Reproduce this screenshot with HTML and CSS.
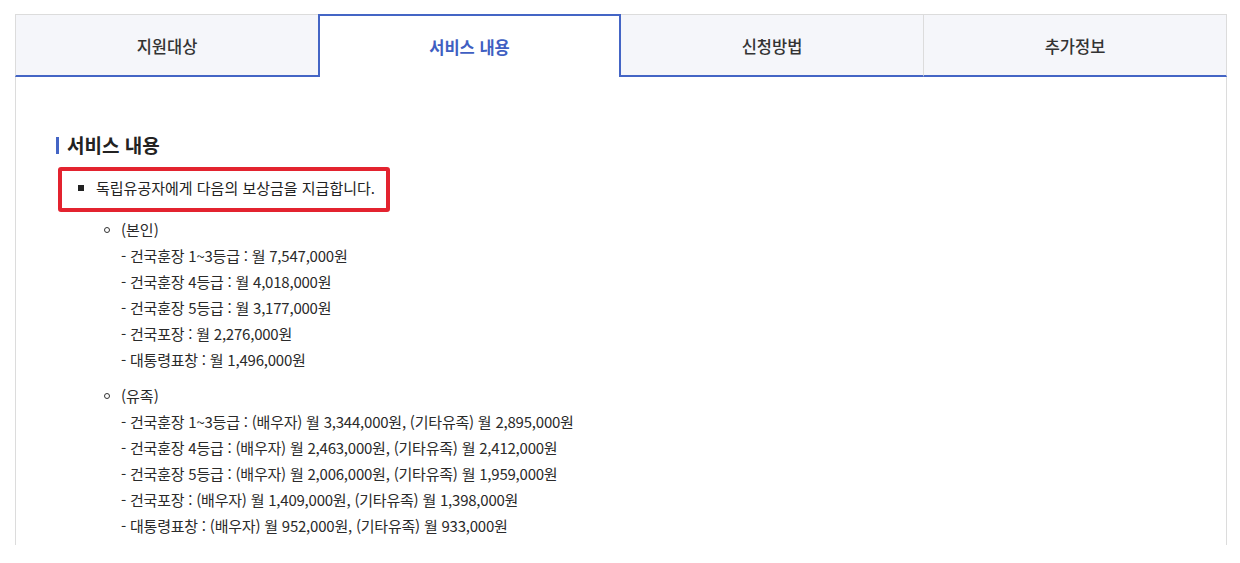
FILE: index.html
```html
<!DOCTYPE html>
<html lang="ko">
<head>
<meta charset="utf-8">
<title>서비스 내용</title>
<link rel="stylesheet" href="styles.css">
</head>
<body>
<div class="wrap">
  <ul class="tabs">
    <li class="tab first">지원대상</li>
    <li class="tab active">서비스 내용</li>
    <li class="tab divider">신청방법</li>
    <li class="tab last">추가정보</li>
  </ul>
  <div class="content">
    <h3 class="title">서비스 내용</h3>
    <div class="highlight">
      <span class="square"></span>
      <span>독립유공자에게 다음의 보상금을 지급합니다.</span>
    </div>
    <div class="group">
      <div class="group-head"><span class="circle"></span>(본인)</div>
      <ul class="lines">
        <li>- 건국훈장 1~3등급 : 월 7,547,000원</li>
        <li>- 건국훈장 4등급 : 월 4,018,000원</li>
        <li>- 건국훈장 5등급 : 월 3,177,000원</li>
        <li>- 건국포장 : 월 2,276,000원</li>
        <li>- 대통령표창 : 월 1,496,000원</li>
      </ul>
    </div>
    <div class="group second">
      <div class="group-head"><span class="circle"></span>(유족)</div>
      <ul class="lines">
        <li>- 건국훈장 1~3등급 : (배우자) 월 3,344,000원, (기타유족) 월 2,895,000원</li>
        <li>- 건국훈장 4등급 : (배우자) 월 2,463,000원, (기타유족) 월 2,412,000원</li>
        <li>- 건국훈장 5등급 : (배우자) 월 2,006,000원, (기타유족) 월 1,959,000원</li>
        <li>- 건국포장 : (배우자) 월 1,409,000원, (기타유족) 월 1,398,000원</li>
        <li>- 대통령표창 : (배우자) 월 952,000원, (기타유족) 월 933,000원</li>
      </ul>
    </div>
  </div>
</div>
</body>
</html>
```
FILE: styles.css
```css
* { box-sizing: border-box; }
html, body { margin: 0; padding: 0; background: #fff; }
body {
  font-family: "Noto Sans CJK KR", "Noto Sans", sans-serif;
  color: #222;
}
.wrap {
  padding: 14px 0 0 15px;
  width: 1227px;
}
.tabs {
  list-style: none;
  margin: 0;
  padding: 0;
  display: flex;
}
.tab {
  width: 303px;
  height: 63px;
  background: #f5f6fa;
  border-top: 1px solid #dcdcdc;
  border-bottom: 2px solid #4465c5;
  display: flex;
  align-items: center;
  justify-content: center;
  font-size: 16.5px;
  font-weight: 500;
  color: #333;
  padding-top: 1px;
}
.tab.first { border-left: 1px solid #dcdcdc; }
.tab.divider { border-right: 1px solid #dcdcdc; }
.tab.last { border-right: 1px solid #dcdcdc; }
.tab.active {
  background: #fff;
  border: 2px solid #4465c5;
  border-bottom: none;
  color: #3f5fc2;
  font-weight: 700;
  padding-top: 0;
}
.content {
  border-left: 1px solid #dcdcdc;
  border-right: 1px solid #dcdcdc;
  padding: 55px 40px 6px 40px;
  width: 1212px;
}
.title {
  margin: 0;
  font-size: 19px;
  line-height: 26px;
  font-weight: 700;
  color: #222;
  display: flex;
  align-items: center;
}
.title::before {
  content: "";
  width: 3px;
  height: 17px;
  background: #4465c5;
  margin-right: 8px;
}
.highlight {
  display: inline-flex;
  align-items: center;
  margin: 9px 0 0 2px;
  border: 4px solid #e3232f;
  border-radius: 3px;
  padding: 4px 11px 7px 16px;
  font-size: 15px;
  line-height: 26px;
  color: #222;
}
.square {
  width: 6px;
  height: 6px;
  background: #222;
  margin-right: 12px;
}
.group {
  margin-top: 5px;
  padding-left: 65px;
  font-size: 15px;
  line-height: 26px;
  color: #2a2a2a;
}
.group.second { margin-top: 10px; }
.group-head {
  display: flex;
  align-items: center;
  margin-left: -17px;
}
.circle {
  width: 6px;
  height: 6px;
  border: 1px solid #333;
  border-radius: 50%;
  margin-right: 11px;
}
.lines {
  list-style: none;
  margin: 0;
  padding: 0;
  letter-spacing: -0.22px;
}
```
